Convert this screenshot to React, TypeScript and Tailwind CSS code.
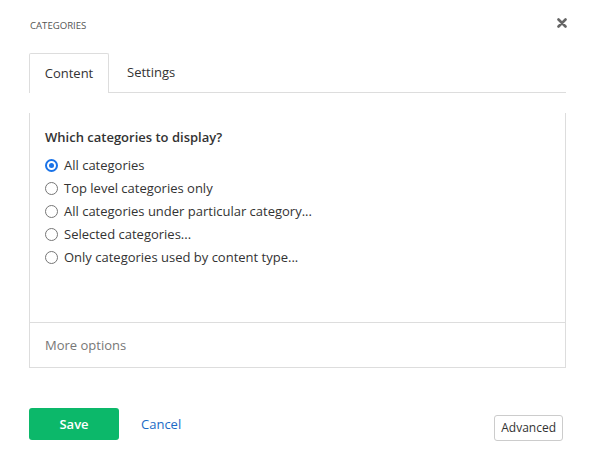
import React from "react";

const options = [
  "All categories",
  "Top level categories only",
  "All categories under particular category...",
  "Selected categories...",
  "Only categories used by content type...",
];

function Radio({ checked }: { checked: boolean }) {
  return checked ? (
    <span className="flex h-[13px] w-[13px] items-center justify-center rounded-full border-2 border-[#1a73e8] bg-white">
      <span className="h-[5px] w-[5px] rounded-full bg-[#1a73e8]" />
    </span>
  ) : (
    <span className="h-[13px] w-[13px] rounded-full border border-[#767676] bg-white" />
  );
}

export default function App() {
  return (
    <div className="h-[455px] w-[595px] bg-white font-['Open_Sans','Liberation_Sans',sans-serif] text-[#333]">
      <div className="flex items-center justify-between pl-[30px] pr-[28px] pt-[18px]">
        <span className="text-[9.6px] leading-[16px] text-[#555]">CATEGORIES</span>
        <svg width="10" height="10" viewBox="0 0 10 10" className="mt-[-6px]">
          <path d="M1.5 1.5 L8.5 8.5 M8.5 1.5 L1.5 8.5" stroke="#666" strokeWidth="2.6" strokeLinecap="round" />
        </svg>
      </div>

      <div className="mx-[29px] mt-[19px] flex border-b border-[#ddd]">
        <div className="-mb-px flex h-[40px] w-[80px] items-center justify-center rounded-t-[2px] border border-b-0 border-[#ddd] bg-white text-[13px]">
          Content
        </div>
        <div className="flex h-[39px] items-center pl-[18px] text-[13px]">Settings</div>
      </div>

      <div className="mx-[29px] mt-[20px] border border-t-0 border-[#ddd]">
        <div className="h-[209px] px-[15px] pt-[15px]">
          <div className="text-[13px] font-semibold leading-[18px]">Which categories to display?</div>
          <div className="mt-[8px] flex flex-col">
            {options.map((o, i) => (
              <label key={o} className="flex h-[23px] items-center gap-[6px] text-[13px]">
                <Radio checked={i === 0} />
                <span>{o}</span>
              </label>
            ))}
          </div>
        </div>
        <div className="flex h-[45px] items-center border-t border-[#ddd] px-[15px] pt-[2px] text-[13px] text-[#777]">
          More options
        </div>
      </div>

      <div className="mx-[29px] mt-[40px] flex items-end">
        <button className="h-[32px] w-[90px] rounded-[3px] bg-[#0cb86a] pt-[1px] text-[13px] font-semibold text-white">Save</button>
        <button className="ml-[22px] h-[32px] pt-[1px] text-[13px] text-[#1a6ac6]">Cancel</button>
        <button className="mb-[-1px] ml-auto mr-[3px] h-[26px] rounded-[3px] border border-[#ccc] bg-white px-[6px] text-[12px] text-[#333]">
          Advanced
        </button>
      </div>
    </div>
  );
}
